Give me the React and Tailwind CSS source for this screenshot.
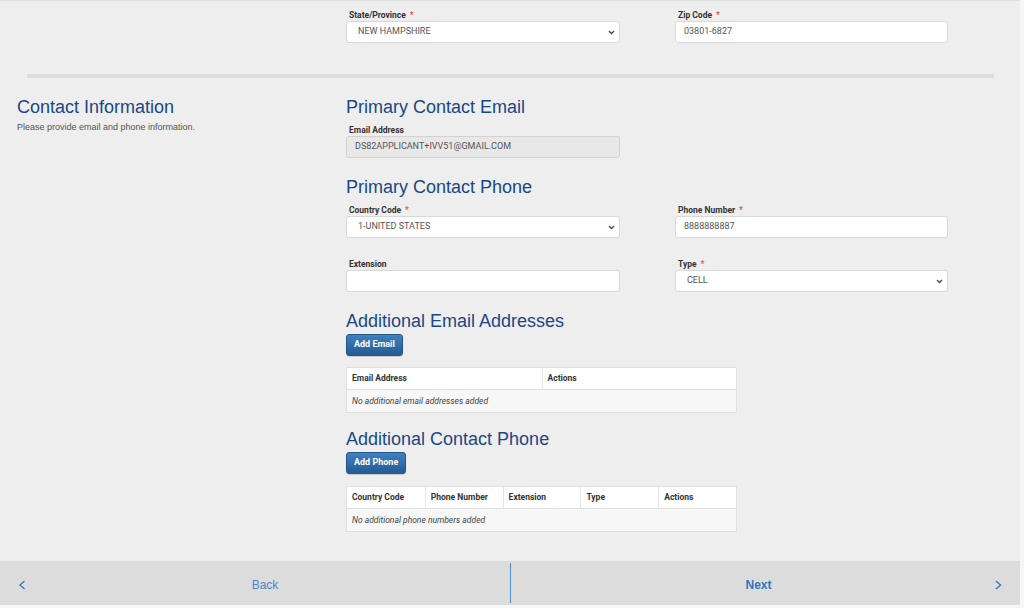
import React from 'react';

const roboto = { fontFamily: 'Roboto, "Liberation Sans", sans-serif' };
const arial = { fontFamily: '"Liberation Sans", Arial, sans-serif' };

const Label = ({ text, required }) => (
  <div className="h-[12px] pl-[3px] text-[8.5px] leading-[12px] font-bold text-[#333333]" style={roboto}>
    {text}
    {required && <span className="ml-[4px] text-[#e0535d]">*</span>}
  </div>
);

const SelectBox = ({ value }) => (
  <div
    className="h-[22px] flex items-center justify-between pl-[11px] pr-[4px] bg-white border border-[#d9d9d9] rounded-[3px] text-[9px] text-[#555555]"
    style={roboto}
  >
    <span>{value}</span>
    <svg width="7" height="5" viewBox="0 0 7 5" fill="none">
      <path d="M1 1l2.5 2.5L6 1" stroke="#444" strokeWidth="1.3" />
    </svg>
  </div>
);

const TextBox = ({ value, disabled }) => (
  <div
    className={
      'h-[22px] flex items-center pl-[8px] border rounded-[3px] text-[9px] text-[#555555] ' +
      (disabled ? 'bg-[#e8e8e8] border-[#d2d2d2]' : 'bg-white border-[#d9d9d9]')
    }
    style={roboto}
  >
    {value}
  </div>
);

const Heading = ({ children, className = '' }) => (
  <h2 className={'text-[18px] leading-[22px] text-[#1a4887] ' + className} style={arial}>
    {children}
  </h2>
);

const BlueButton = ({ children, className = '' }) => (
  <button
    className={
      'h-[22px] px-[7px] rounded-[3px] border border-[#22568c] bg-gradient-to-b from-[#3f80c1] to-[#245b92] text-white text-[9px] font-bold shadow-[0_1px_1px_rgba(0,0,0,0.15)] ' +
      className
    }
    style={roboto}
  >
    {children}
  </button>
);

const EmptyTable = ({ columns, message, className = '' }) => (
  <div className={'w-[391px] border border-[#e0e0e0] ' + className} style={roboto}>
    <div
      className="h-[22px] grid bg-white border-b border-[#e0e0e0]"
      style={{ gridTemplateColumns: `repeat(${columns.length}, minmax(0, 1fr))` }}
    >
      {columns.map((c, i) => (
        <div
          key={c}
          className={
            'flex items-center pl-[5px] text-[8.5px] font-bold text-[#333333] ' +
            (i > 0 ? 'border-l border-[#e6e6e6]' : '')
          }
        >
          {c}
        </div>
      ))}
    </div>
    <div className="h-[22px] flex items-center pl-[5px] bg-[#f7f7f7] text-[8.5px] italic text-[#444444]">
      {message}
    </div>
  </div>
);

const App = () => {
  return (
    <div className="w-[1024px] h-[608px] flex bg-[#f6f6f6] overflow-hidden">
      <div className="w-[1020px] h-[605px] flex flex-col bg-[#eeeeee] border-t border-[#e1e1e1]">
        <div className="flex-1">
          {/* end of address block */}
          <div className="pl-[346px] pt-[8px] grid grid-cols-[274px_273px] gap-x-[55px]">
            <div>
              <Label text="State/Province" required />
              <SelectBox value="NEW HAMPSHIRE" />
            </div>
            <div>
              <Label text="Zip Code" required />
              <TextBox value="03801-6827" />
            </div>
          </div>

          <div className="ml-[27px] mt-[31px] w-[967px] h-[4px] bg-[#dddddd]" />

          <div className="flex pt-[18px]">
            <div className="w-[346px] pl-[17px]">
              <Heading>Contact Information</Heading>
              <p className="mt-[3px] text-[9px] leading-[12px] text-[#555555]" style={arial}>
                Please provide email and phone information.
              </p>
            </div>

            <div className="flex flex-col items-start">
              <Heading>Primary Contact Email</Heading>
              <div className="mt-[6px] w-[274px]">
                <Label text="Email Address" />
                <TextBox value="DS82APPLICANT+IVV51@GMAIL.COM" disabled />
              </div>

              <Heading className="mt-[18px]">Primary Contact Phone</Heading>
              <div className="mt-[6px] grid grid-cols-[274px_273px] gap-x-[55px] gap-y-[20px]">
                <div>
                  <Label text="Country Code" required />
                  <SelectBox value="1-UNITED STATES" />
                </div>
                <div>
                  <Label text="Phone Number" required />
                  <TextBox value="8888888887" />
                </div>
                <div>
                  <Label text="Extension" />
                  <TextBox value="" />
                </div>
                <div>
                  <Label text="Type" required />
                  <SelectBox value="CELL" />
                </div>
              </div>

              <Heading className="mt-[18px]">Additional Email Addresses</Heading>
              <BlueButton className="mt-[2px]">Add Email</BlueButton>
              <EmptyTable
                className="mt-[11px]"
                columns={['Email Address', 'Actions']}
                message="No additional email addresses added"
              />

              <Heading className="mt-[15px]">Additional Contact Phone</Heading>
              <BlueButton className="mt-[2px]">Add Phone</BlueButton>
              <EmptyTable
                className="mt-[12px]"
                columns={['Country Code', 'Phone Number', 'Extension', 'Type', 'Actions']}
                message="No additional phone numbers added"
              />
            </div>
          </div>
        </div>

        {/* footer nav */}
        <div className="h-[44px] flex bg-[#dcdcdc]" style={arial}>
          <button className="w-[510px] flex items-center pt-[3px] pl-[18px] pr-[6px]">
            <svg width="8" height="10" viewBox="0 0 8 10" fill="none">
              <path d="M6.5 1L2 5l4.5 4" stroke="#3b7cc4" strokeWidth="1.5" />
            </svg>
            <span className="flex-1 text-center text-[12px] text-[#4a87cc]">Back</span>
          </button>
          <div className="w-px my-[2px] bg-[#4d8ed4]" />
          <button className="flex-1 flex items-center pt-[3px] pl-[11px] pr-[18px]">
            <span className="flex-1 text-center text-[12px] font-bold text-[#3276c0]">Next</span>
            <svg width="7" height="10" viewBox="0 0 7 10" fill="none">
              <path d="M1 1l4.5 4L1 9" stroke="#3b7cc4" strokeWidth="1.5" />
            </svg>
          </button>
        </div>
      </div>
    </div>
  );
};

export default App;
